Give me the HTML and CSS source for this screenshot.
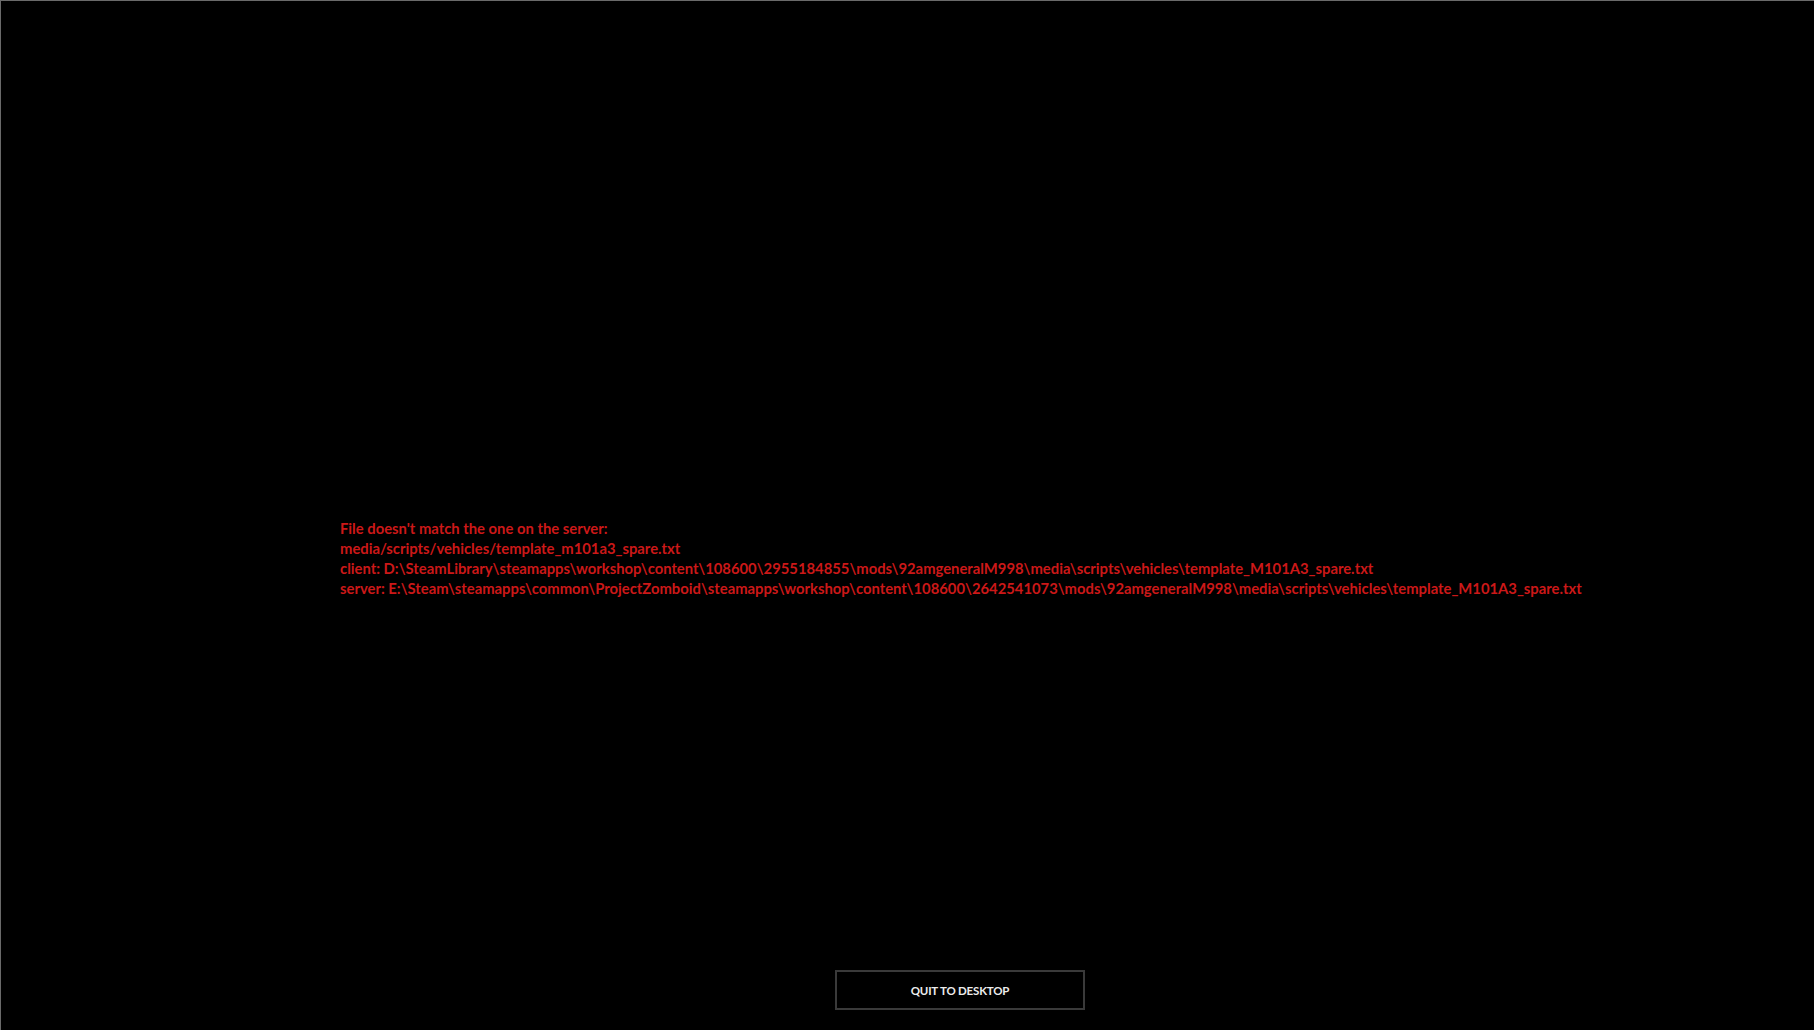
FILE: index.html
```html
<!DOCTYPE html>
<html>
<head>
<meta charset="utf-8">
<link rel="stylesheet" href="styles.css">
</head>
<body>
<div class="screen">
  <div class="message">
    <div class="line">File doesn't match the one on the server:</div>
    <div class="line">media/scripts/vehicles/template_m101a3_spare.txt</div>
    <div class="line">client: D:\SteamLibrary\steamapps\workshop\content\108600\2955184855\mods\92amgeneralM998\media\scripts\vehicles\template_M101A3_spare.txt</div>
    <div class="line">server: E:\Steam\steamapps\common\ProjectZomboid\steamapps\workshop\content\108600\2642541073\mods\92amgeneralM998\media\scripts\vehicles\template_M101A3_spare.txt</div>
  </div>
  <div class="actions">
    <button class="quit">QUIT TO DESKTOP</button>
  </div>
</div>
</body>
</html>
```
FILE: styles.css
```css
html, body {
  margin: 0;
  padding: 0;
  background: #000;
}
.screen {
  box-sizing: border-box;
  width: 1814px;
  height: 1030px;
  background: #000;
  border-top: 1px solid #6a6a6a;
  border-left: 1px solid #6a6a6a;
  display: flex;
  flex-direction: column;
}
.message {
  padding-top: 517px;
  padding-left: 339px;
  font-family: Lato, "Liberation Sans", sans-serif;
  font-weight: 700;
  font-size: 14.8px;
  line-height: 20px;
  color: #cc1818;
  white-space: nowrap;
}
.actions {
  margin-top: auto;
  padding-left: 834px;
  padding-bottom: 20px;
}
.quit {
  box-sizing: border-box;
  width: 250px;
  height: 40px;
  background: #000;
  border: 2px solid #3a3a3a;
  color: #ececec;
  font-family: Lato, "Liberation Sans", sans-serif;
  font-size: 11.5px;
  font-weight: 700;
  letter-spacing: -0.2px;
  padding: 0;
}
```
